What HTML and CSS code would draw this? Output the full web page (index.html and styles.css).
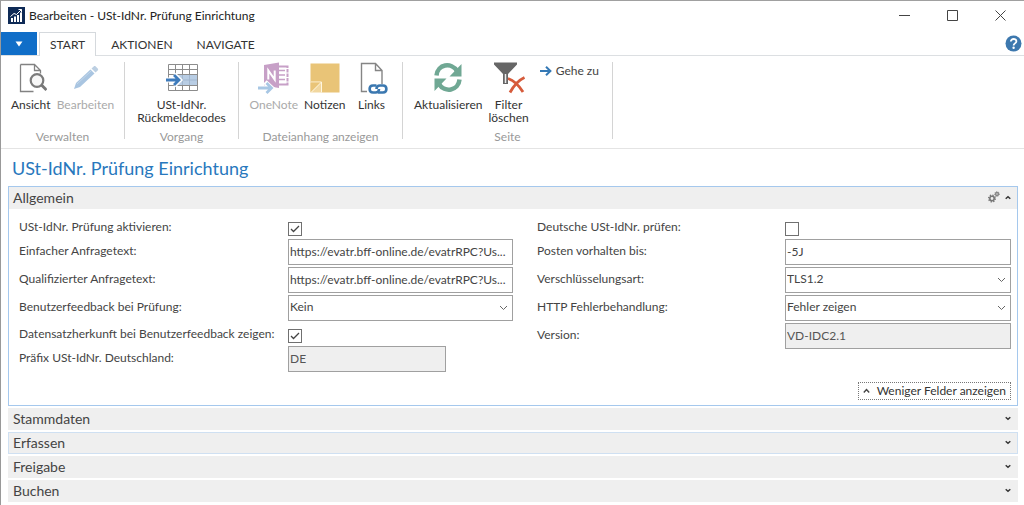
FILE: index.html
```html
<!DOCTYPE html>
<html lang="de">
<head>
<meta charset="utf-8">
<title>Bearbeiten - USt-IdNr. Prüfung Einrichtung</title>
<link rel="stylesheet" href="styles.css">
</head>
<body>
<div class="window">
  <header class="titlebar">
    <svg class="app-icon" width="17" height="17" viewBox="0 0 17 17" aria-hidden="true"><rect width="17" height="17" fill="#0e2a56"/><path d="M4 15v-4M7 15v-5.500M10 15V8M13 15V5.500" stroke="#fff" stroke-width="2" fill="none"/><path d="M2.500 9.500 6 6.500l2.500 1L13.500 2.500M10.500 2.500h3v3" stroke="#fff" fill="none"/></svg>
    <span class="window-title">Bearbeiten - USt-IdNr. Prüfung Einrichtung</span>
    <button class="window-button" type="button" aria-label="Minimieren"><svg width="11" height="11" viewBox="0 0 11 11"><path d="M0 5.500h11" stroke="#444"/></svg></button>
    <button class="window-button" type="button" aria-label="Maximieren"><svg width="11" height="11" viewBox="0 0 11 11"><path d="M.5.5h10v10H.5z" stroke="#444" fill="none"/></svg></button>
    <button class="window-button" type="button" aria-label="Schließen"><svg width="11" height="11" viewBox="0 0 11 11"><path d="m.5.5 10 10M10.500.5l-10 10" stroke="#444"/></svg></button>
  </header>

  <nav class="tabs" aria-label="Menüband">
    <button class="file-menu" type="button" aria-label="Anwendungsmenü"><svg width="8" height="6" viewBox="0 0 8 6"><path d="M.5.5h7L4 5.500z" fill="#fff"/></svg></button>
    <button class="tab active" type="button">START</button>
    <button class="tab" type="button">AKTIONEN</button>
    <button class="tab" type="button">NAVIGATE</button>
    <button class="help" type="button" aria-label="Hilfe"><svg width="17" height="17" viewBox="0 0 17 17"><circle cx="8.500" cy="8.500" r="8" fill="#3d78ae"/><path d="M5.800 6.600C5.800 3 11.400 3.300 11.400 6.300c0 2.100-2.800 2.100-2.800 4.200" stroke="#fff" stroke-width="1.800" fill="none"/><circle cx="8.600" cy="12.800" r="1.200" fill="#fff"/></svg></button>
  </nav>

  <section class="ribbon">
    <div class="ribbon-group manage">
      <div class="actions">
        <button class="action" type="button">
          <svg width="32" height="32" viewBox="0 0 32 32"><path d="M5.500 2.500h14l6 6v3M5.500 2.500v27h13M19.500 2.500v6h6" fill="none" stroke="#828282" stroke-width="1.300"/><circle cx="22" cy="18.500" r="6.300" fill="#f7f7f7" stroke="#7b7b7b" stroke-width="2.200"/><path d="m26.500 23 5 5" stroke="#777" stroke-width="3"/></svg>
          <span>Ansicht</span></button>
        <button class="action muted" type="button" disabled>
          <svg width="32" height="32" viewBox="0 0 32 32"><path d="m5 27 2-6L21.500 7.500l4 4L11 25z" fill="#a9c5e1"/><path d="m22.500 6.500 2.200-2c.6-.6 1.400-.6 2 0l2 2c.6.6.6 1.400 0 2l-2.200 2z" fill="#bccfe2"/><path d="M8 22 22 9" stroke="#c2d6ea" stroke-width="1"/></svg>
          <span>Bearbeiten</span></button>
      </div>
      <div class="group-name">Verwalten</div>
    </div>
    <div class="ribbon-group process">
      <div class="actions">
        <button class="action" type="button">
          <svg class="grid-icon" width="32" height="32" viewBox="0 0 32 32"><path d="M2.500 2.500h29v26h-29zM2.500 7.500h29M2.500 12.500h29M2.500 23.500h29M9.500 2.500v26M16.500 2.500v26M23.500 2.500v26" fill="none" stroke="#8c8c8c"/><path d="M10 13h21v10H10z" fill="#b8cde4"/><path d="M16.500 13v10M23.500 13v10M16 18h15" stroke="#a2b7cf"/><path d="M0 18h13M8 12.500l5.500 5.500L8 23.500" fill="none" stroke="#fff" stroke-width="5"/><path d="M0 18h12M8 13l5 5-5 5" fill="none" stroke="#3e7bbb" stroke-width="2.800"/></svg>
          <span>USt-IdNr.<br>Rückmeldecodes</span></button>
      </div>
      <div class="group-name">Vorgang</div>
    </div>
    <div class="ribbon-group attachments">
      <div class="actions">
        <button class="action muted" type="button" disabled>
          <svg width="32" height="32" viewBox="0 0 32 32"><path d="M19 4.500h10.500v18H19" fill="#fff" stroke="#c7a0c7" stroke-width="2"/><path d="M20 8.500h7M20 13h7M20 17.500h7" stroke="#c7a0c7" stroke-width="1.500"/><path d="M28 6.500h3M28 11h3M28 15.500h3M28 20h3" stroke="#fff" stroke-width="1.200"/><path d="m6 3 15-2.500V26L6 23.500z" fill="#c7a0c7"/><path d="M10.300 17.500v-9l6.400 9v-9" stroke="#fff" stroke-width="2" fill="none"/><path d="M0 26h13M7 20l6.500 6L7 32" fill="none" stroke="#fff" stroke-width="5"/><path d="M0 26h13M8.500 21l5 5-5 5" fill="none" stroke="#a8c7e4" stroke-width="2.800"/></svg>
          <span>OneNote</span></button>
        <button class="action" type="button">
          <svg width="32" height="32" viewBox="0 0 32 32"><path d="M1.500 1.500h29v29h-18l-11-11z" fill="#e9c477"/><path d="M1.500 20v10.500h11V20z" fill="#f1d79f"/><path d="M2 20h10.500v10.500" fill="none" stroke="#fff6df"/><path d="M1.500 20.500h10.500l-10.500 10z" fill="#e9c477"/><path d="M12.500 20 2 30.500" stroke="#fff6df"/></svg>
          <span>Notizen</span></button>
        <button class="action" type="button">
          <svg width="32" height="32" viewBox="0 0 32 32"><path d="M11 29.500H5.500v-28h14l6.500 7V22M19.500 1.500v7H26" fill="none" stroke="#858585" stroke-width="1.400"/><g fill="none" stroke="#3b78b0" stroke-width="2.600"><path d="M20.500 23.500H17c-4.500 0-4.500 7 0 7h2.500c2 0 3.500-1 3.500-3.500"/><path d="M22 30.500h5c4.500 0 4.500-7 0-7h-3c-2.500 0-3.500 1.500-3.500 3.500"/></g></svg>
          <span>Links</span></button>
      </div>
      <div class="group-name">Dateianhang anzeigen</div>
    </div>
    <div class="ribbon-group page-group">
      <div class="actions">
        <button class="action" type="button">
          <svg width="32" height="32" viewBox="0 0 32 32"><g fill="none" stroke="#70a894" stroke-width="4.500"><path d="M4.500 13.500C5.500 2 19.500 0 25 9"/><path d="M27.500 17.500C26.500 29 12.500 31 7 22"/></g><path d="M29.500 2v12.500H17.500zM2.500 29V16.500h12z" fill="#70a894"/></svg>
          <span>Aktualisieren</span></button>
        <button class="action" type="button">
          <svg width="32" height="32" viewBox="0 0 32 32"><path d="M1 .5h23v2L15 12v10h-5V12L1 2.500z" fill="#666"/><path d="M12.500 12v9" stroke="#eee" stroke-width="1.500"/><path d="M15 16.500c6 2 11 7 15 13.500M31.500 15.500C24 19 20 25 17 30.500" stroke="#d65b3b" stroke-width="2.800" fill="none"/></svg>
          <span>Filter<br>löschen</span></button>
        <button class="inline-action" type="button">
          <svg width="12" height="10" viewBox="0 0 12 10"><path d="M0 5h10M6 .8 10.400 5 6 9.200" stroke="#3579b5" stroke-width="2" fill="none"/></svg>
          <span>Gehe zu</span></button>
      </div>
      <div class="group-name">Seite</div>
    </div>
  </section>

  <main class="content">
    <h1>USt-IdNr. Prüfung Einrichtung</h1>
    <section class="fasttab">
      <div class="fasttab-header"><h2>Allgemein</h2>
        <svg width="12" height="12" viewBox="0 0 12 12" aria-hidden="true"><circle cx="4" cy="7.500" r="2.200" fill="none" stroke="#777" stroke-width="1.600"/><circle cx="4" cy="7.500" r="3.300" fill="none" stroke="#777" stroke-width="1.500" stroke-dasharray="1.300 1.290"/><circle cx="9" cy="3" r="1.400" fill="none" stroke="#777" stroke-width="1.200"/><circle cx="9" cy="3" r="2.300" fill="none" stroke="#777" stroke-dasharray="1 .806"/></svg>
        <button class="collapse" type="button" aria-label="Allgemein reduzieren"><svg width="6" height="5" viewBox="0 0 6 5"><path d="m.7 3.700 2.300-2 2.300 2" stroke="#333" stroke-width="1.500" fill="none"/></svg></button>
      </div>
      <form class="fields">
        <div class="column left">
          <div class="field check"><label for="f1">USt-IdNr. Prüfung aktivieren:</label><input id="f1" type="checkbox" checked></div>
          <div class="field"><label for="f2">Einfacher Anfragetext:</label><input id="f2" type="text" value="https://evatr.bff-online.de/evatrRPC?Us..."></div>
          <div class="field"><label for="f3">Qualifizierter Anfragetext:</label><input id="f3" type="text" value="https://evatr.bff-online.de/evatrRPC?Us..."></div>
          <div class="field"><label for="f4">Benutzerfeedback bei Prüfung:</label><select id="f4"><option>Kein</option></select></div>
          <div class="field check"><label for="f5">Datensatzherkunft bei Benutzerfeedback zeigen:</label><input id="f5" type="checkbox" checked></div>
          <div class="field"><label for="f6">Präfix USt-IdNr. Deutschland:</label><input id="f6" class="short" type="text" value="DE" readonly></div>
        </div>
        <div class="column right">
          <div class="field check"><label for="f7">Deutsche USt-IdNr. prüfen:</label><input id="f7" type="checkbox"></div>
          <div class="field"><label for="f8">Posten vorhalten bis:</label><input id="f8" type="text" value="-5J"></div>
          <div class="field"><label for="f9">Verschlüsselungsart:</label><select id="f9"><option>TLS1.2</option></select></div>
          <div class="field"><label for="f10">HTTP Fehlerbehandlung:</label><select id="f10"><option>Fehler zeigen</option></select></div>
          <div class="field"><label for="f11">Version:</label><input id="f11" type="text" value="VD-IDC2.1" readonly></div>
        </div>
      </form>
      <div class="fasttab-footer">
        <button class="fewer" type="button"><svg width="7" height="6" viewBox="0 0 7 6"><path d="m.8 4.500 2.700-3 2.700 3" stroke="#444" stroke-width="1.400" fill="none"/></svg><span>Weniger Felder anzeigen</span></button>
      </div>
    </section>
    <button class="section" type="button"><span>Stammdaten</span><svg width="6" height="5" viewBox="0 0 6 5"><path d="m.7 1.300 2.300 2 2.300-2" stroke="#333" stroke-width="1.500" fill="none"/></svg></button>
    <button class="section hovered" type="button"><span>Erfassen</span><svg width="6" height="5" viewBox="0 0 6 5"><path d="m.7 1.300 2.300 2 2.300-2" stroke="#333" stroke-width="1.500" fill="none"/></svg></button>
    <button class="section" type="button"><span>Freigabe</span><svg width="6" height="5" viewBox="0 0 6 5"><path d="m.7 1.300 2.300 2 2.300-2" stroke="#333" stroke-width="1.500" fill="none"/></svg></button>
    <button class="section" type="button"><span>Buchen</span><svg width="6" height="5" viewBox="0 0 6 5"><path d="m.7 1.300 2.300 2 2.300-2" stroke="#333" stroke-width="1.500" fill="none"/></svg></button>
  </main>
</div>
</body>
</html>
```
FILE: styles.css
```css
* { box-sizing: border-box; }

body {
  margin: 0;
  background: #fff;
  color: #444;
  font: 12px/16px Lato, "Open Sans", sans-serif;
}

button, input, select { font: inherit; color: inherit; }
button { padding: 0; border: 0; background: none; }
h1, h2 { margin: 0; font-weight: 400; }
svg { flex: none; display: block; }

.window {
  min-height: 100vh;
  border-top: 1px solid #a0a0a0;
  border-left: 1px solid #999;
}

.titlebar { display: flex; align-items: center; height: 31px; padding: 0 0 2px 7px; color: #222; }
.window-title { flex: 1; padding-left: 4px; }
.window-button { display: flex; justify-content: center; align-items: center; width: 48px; height: 29px; }

.tabs { display: flex; height: 24px; border-bottom: 1px solid #dcdfe2; color: #333; }
.file-menu { display: flex; align-items: center; justify-content: center; width: 36px; height: 23px; margin-right: 2px; background: #106ec8; }
.tab { height: 24px; padding: 2px 12px 0; }
.tab.active { padding: 1px 10px 0; margin-right: 3px; border: 1px solid #d5d9dd; border-bottom: 0; background: #fff; }
.help { margin-left: auto; padding: 3px 2px; }

.ribbon { display: flex; height: 93px; padding: 6px 0 9px; border-bottom: 1px solid #e4e4e4; line-height: 13px; }
.ribbon-group { display: flex; flex-direction: column; justify-content: space-between; border-right: 1px solid #d4d4d4; }
.manage { width: 124px; }
.process { width: 114px; }
.attachments { width: 164px; }
.page-group { width: 210px; }
.actions { display: flex; justify-content: center; align-items: flex-start; gap: 6px; }
.page-group .actions { justify-content: flex-start; padding-left: 11px; }
.action { display: flex; flex-direction: column; align-items: center; gap: 4px; min-width: 40px; color: #333; white-space: nowrap; }
.muted { color: #aaa; }
.inline-action { display: flex; align-items: center; gap: 4px; padding: 2px 0 0 5px; white-space: nowrap; }
.group-name { margin-bottom: -5px; color: #999; line-height: 14px; text-align: center; }

.content { padding: 7px 6px 3px 7px; }
h1 { padding-left: 4px; color: #2878bd; font-size: 18px; line-height: 24px; }
h2 { flex: 1; font-size: 14px; line-height: 21px; }

.fasttab { margin-top: 6px; margin-bottom: 2px; border: 1px solid #a5c8ed; }
.fasttab-header { display: flex; align-items: center; gap: 5px; height: 22px; padding: 0 6px 2px 4px; background: #efefef; }
.collapse { padding: 2px 0; }

.fields { display: grid; grid-template-columns: 494fr 474fr; gap: 24px; padding: 7px 6px 0 10px; }
.column { display: flex; flex-direction: column; gap: 2px; min-width: 0; }
.field { display: grid; align-items: start; height: 26px; }
.left .field { grid-template-columns: 269fr 225fr; }
.right .field { grid-template-columns: 248fr 226fr; }
.field label { padding-top: 4px; white-space: nowrap; }
.field.check { height: 21px; }
.field.check label { padding-top: 3px; }
.field input[type="text"], .field select {
  width: 100%;
  min-width: 0;
  height: 26px;
  margin: 0;
  padding: 0 1px 2px;
  border: 1px solid #a0a0a0;
  border-radius: 0;
  background: #fff;
}
.field input[type="text"][readonly] { background: #efefef; color: #555; }
.field input.short { width: 70%; }
.field select {
  appearance: none;
  background: #fff url("data:image/svg+xml,%3Csvg xmlns='http://www.w3.org/2000/svg' width='9' height='6'%3E%3Cpath d='m1 1 3.500 3.500L8 1' fill='none' stroke='%23666'/%3E%3C/svg%3E") no-repeat right 4px center;
}
.field input[type="checkbox"] {
  appearance: none;
  width: 14px;
  height: 14px;
  margin: 6px 0 0;
  border: 1px solid #707070;
  border-radius: 0;
  background: #fff;
}
.field input[type="checkbox"]:checked {
  background: url("data:image/svg+xml,%3Csvg xmlns='http://www.w3.org/2000/svg' width='12' height='12'%3E%3Cpath d='m2 6 2.500 2.500L10 3' fill='none' stroke='%23444' stroke-width='1.300'/%3E%3C/svg%3E") center;
}

.fasttab-footer { display: flex; justify-content: flex-end; padding: 10px 6px 5px; }
.fewer { display: flex; align-items: center; gap: 7px; height: 18px; padding: 0 4px; border: 1px dotted #777; color: #333; }

.section {
  display: flex;
  align-items: center;
  justify-content: space-between;
  width: 100%;
  height: 22px;
  margin-bottom: 2px;
  padding: 0 6px 1px 4px;
  border: 1px solid #efefef;
  background: #efefef;
  font-size: 14px;
}
.section.hovered { border-color: #cfe0f2; }
```
